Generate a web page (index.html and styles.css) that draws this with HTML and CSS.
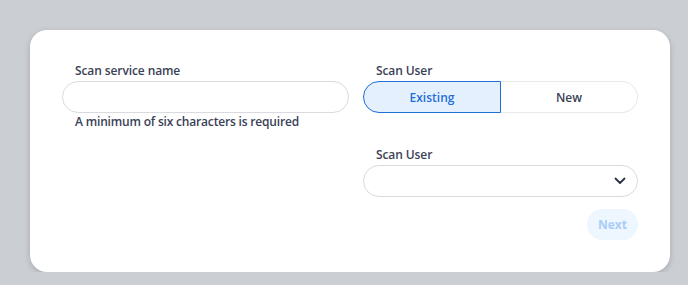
FILE: index.html
```html
<!DOCTYPE html>
<html lang="en">
<head>
    <meta charset="UTF-8">
    <meta name="viewport" content="width=device-width, initial-scale=1.0">
    <title>Scan Service</title>
    <link rel="stylesheet" href="styles.css">
</head>
<body>
    <div class="card">
        <div class="grid">
            <div class="field">
                <label class="label">Scan service name</label>
                <input class="input" type="text">
                <div class="hint">A minimum of six characters is required</div>
            </div>
            <div class="col">
                <div class="field">
                    <label class="label">Scan User</label>
                    <div class="toggle">
                        <button class="toggle-btn active">Existing</button>
                        <button class="toggle-btn">New</button>
                    </div>
                </div>
                <div class="field">
                    <label class="label">Scan User</label>
                    <div class="select">
                        <svg class="chevron" width="12" height="8" viewBox="0 0 12 8"><path d="M1.5 1.5 L6 6 L10.5 1.5" fill="none" stroke="#2c3347" stroke-width="1.8" stroke-linecap="round" stroke-linejoin="round"/></svg>
                    </div>
                </div>
                <div class="actions">
                    <button class="next" disabled>Next</button>
                </div>
            </div>
        </div>
    </div>
</body>
</html>
```

FILE: styles.css
```css
body {
    margin: 0;
    padding: 30px 18px 0 30px;
    background: #cbced3;
    font-family: "Open Sans", Lato, sans-serif;
    color: #3a4156;
}
.card {
    width: 576px;
    background: #fff;
    border-radius: 17px;
    padding: 32px;
    box-shadow: 0 2px 6px rgba(0, 0, 0, 0.18);
}
.grid {
    display: grid;
    grid-template-columns: 287px 275px;
    gap: 14px;
}
.col {
    display: flex;
    flex-direction: column;
    gap: 33px;
}
.field {
    display: flex;
    flex-direction: column;
}
.label {
    font-size: 12px;
    font-weight: 600;
    line-height: 16px;
    padding-left: 13px;
    margin-top: 1px;
    margin-bottom: 2px;
    letter-spacing: -0.1px;
}
.input, .select {
    box-sizing: border-box;
    height: 32px;
    border: 1px solid #d9dbe0;
    border-radius: 16px;
    background: #fff;
    outline: none;
}
.select {
    display: flex;
    align-items: center;
    justify-content: flex-end;
    padding-right: 11px;
}
.hint {
    font-size: 12px;
    font-weight: 600;
    line-height: 16px;
    padding-left: 13px;
    margin-top: 1px;
    letter-spacing: -0.18px;
}
.toggle {
    display: flex;
    height: 32px;
}
.toggle-btn {
    flex: 1;
    font-family: inherit;
    font-size: 12px;
    font-weight: 600;
    color: #3a4156;
    background: #fff;
    border: 1px solid #e8e9eb;
    border-left: none;
    border-radius: 0 16px 16px 0;
    padding: 0;
}
.toggle-btn.active {
    color: #1f6fd8;
    background: #e4f0fd;
    border: 1px solid #1f6fd8;
    border-radius: 16px 0 0 16px;
}
.actions {
    display: flex;
    justify-content: flex-end;
    margin-top: -21px;
}
.next {
    width: 51px;
    height: 31px;
    border: none;
    border-radius: 16px;
    background: #eef6ff;
    color: #a8cdf6;
    font-family: inherit;
    font-size: 12px;
    font-weight: 700;
    padding: 0;
}
```
